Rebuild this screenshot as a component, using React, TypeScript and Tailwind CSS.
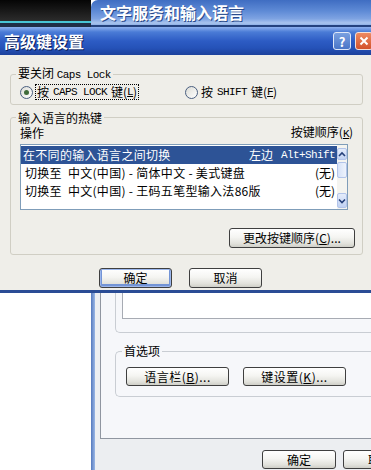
import React from "react";

const mono = "font-['Liberation_Mono',monospace] text-[11px] tracking-[-0.6px]";

function Btn({
  className,
  children,
  def,
}: {
  className: string;
  children: React.ReactNode;
  def?: boolean;
}) {
  return (
    <div
      className={
        "flex items-center justify-center rounded-[3px] border border-[#3f3f3f] bg-[linear-gradient(180deg,#ffffff_0%,#f5f5f2_45%,#e2e2dc_80%,#cfcfc8_100%)] text-[12px] leading-none text-black " +
        (def ? "shadow-[inset_0_0_0_1px_#9bb6ec,inset_0_-1px_0_2px_#7394d6] " : "") +
        className
      }
    >
      {children}
    </div>
  );
}

function Radio({ checked }: { checked?: boolean }) {
  return (
    <div className="flex h-[13px] w-[13px] shrink-0 items-center justify-center rounded-full border border-[#4a5f80] bg-[linear-gradient(135deg,#dcdcd6,#ffffff)]">
      {checked && <div className="h-[5px] w-[5px] rounded-full bg-[#3f6b3a]" />}
    </div>
  );
}

function Chevron({ up }: { up?: boolean }) {
  return (
    <svg width="8" height="6" viewBox="0 0 8 6">
      <path
        d={up ? "M1 5 L4 2 L7 5" : "M1 1.5 L4 4.5 L7 1.5"}
        fill="none"
        stroke="#25407a"
        strokeWidth="1.6"
      />
    </svg>
  );
}

export default function App() {
  return (
    <div className="relative flex h-[470px] w-[371px] overflow-hidden bg-white font-['Noto_Sans_CJK_SC',sans-serif] text-black">
      {/* desktop strip on the left */}
      <div className="flex w-[91px] shrink-0 flex-col">
        <div className="h-[21px] bg-[linear-gradient(180deg,#050505,#2c2c2c)]" />
        <div className="h-[2px] bg-[#48c4d4]" />
        <div className="h-[4px] bg-[#1f2d46]" />
        <div className="flex-1 bg-white" />
      </div>

      {/* back window */}
      <div className="flex min-w-0 flex-1 flex-col">
        <div className="h-[25px] shrink-0 rounded-tl-[7px] bg-[linear-gradient(180deg,#3f6dc2_0%,#5f8bd6_45%,#7ea3e2_75%,#a9c4ee_92%,#8eb0e6_100%)] pl-[9px] text-[16px] font-bold leading-[24px] text-white [text-shadow:1px_1px_#2a4a8a]">
          文字服务和输入语言
        </div>
        <div className="h-[2px] shrink-0 bg-[#24427e]" />
        <div className="flex flex-1">
          <div className="w-[4px] shrink-0 bg-[linear-gradient(90deg,#5579bd,#9ab7e6)]" />
          <div className="flex flex-1 flex-col bg-[#eceef1] pl-[5px] pt-[23px]">
            {/* tab page */}
            <div className="flex h-[389px] w-[400px] shrink-0 flex-col border-b border-l border-t border-[#9096a0] bg-[#f6f7fa] pl-[14px] pt-[9px]">
              <div className="h-[273px] w-[400px] shrink-0 rounded-l-[5px] border-b border-l border-t border-[#c9cdd3] pl-[6px] pt-[14px]">
                <div className="h-[244px] w-[400px] border-b border-l border-t border-[#a7abb3] bg-white" />
              </div>
              <fieldset className="mt-[11px] w-[400px] rounded-l-[5px] border-b border-l border-t border-[#c9cdd3] pl-[10px]">
                <legend className="ml-[-4px] px-[2px] text-[12px] leading-[14px]">首选项</legend>
                <div className="flex gap-[14px] pb-[10px] pt-[9px]">
                  <Btn className="h-[19px] w-[103px] tracking-[0.5px]">
                    语言栏(<span className="underline">B</span>)...
                  </Btn>
                  <Btn className="h-[19px] w-[103px] tracking-[0.5px]">
                    键设置(<span className="underline">K</span>)...
                  </Btn>
                </div>
              </fieldset>
            </div>
            <div className="ml-[162px] mt-[11px] flex gap-[7px]">
              <Btn className="h-[19px] w-[74px] shrink-0">确定</Btn>
              <Btn className="h-[19px] w-[74px] shrink-0">取消</Btn>
            </div>
          </div>
        </div>
      </div>

      {/* front dialog */}
      <div className="absolute left-0 top-[27px] flex w-[385px] flex-col">
        <div className="flex h-[28px] items-center bg-[linear-gradient(180deg,#8db0ee_0%,#4a7bd6_18%,#2d5cc4_50%,#2552b8_75%,#1d419c_100%)] pl-[4px] pr-[12px]">
          <div className="flex-1 text-[16px] font-bold leading-none text-white [text-shadow:1px_1px_#0b1f5a]">
            高级键设置
          </div>
          <div className="flex h-[18px] w-[18px] items-center justify-center rounded-[3px] border border-[#dfe8f8] bg-[linear-gradient(180deg,#7aa0e0,#4a76c8)] text-[13px] font-bold leading-none text-white">
            ?
          </div>
          <div className="ml-[4px] flex h-[18px] w-[18px] items-center justify-center rounded-[3px] border border-[#f4e0d8] bg-[linear-gradient(180deg,#ee8a62,#d3532c)]">
            <svg width="10" height="10" viewBox="0 0 10 10">
              <path d="M1.5 1.5 L8.5 8.5 M8.5 1.5 L1.5 8.5" stroke="#fff" strokeWidth="2" />
            </svg>
          </div>
        </div>

        <div className="flex h-[235px] flex-col bg-[#efeee9] pl-[10px] text-[12px]">
          {/* Caps Lock group */}
          <fieldset className="mt-[11px] w-[353px] rounded-[3px] border border-[#d0cec4] px-[9px]">
            <legend className="ml-[-4px] px-[2px] leading-[14px]">
              要关闭 <span className={mono}>Caps Lock</span>
            </legend>
            <div className="mb-[4px] mt-[2px] flex h-[16px] items-center">
              <div className="flex w-[165px] items-center">
                <Radio checked />
                <div className="ml-[2px] flex h-[16px] items-center border border-dotted border-black px-[1px] leading-none">
                  按 <span className={mono + " mx-[4px]"}>CAPS LOCK</span>键(
                  <span className={mono + " underline"}>L</span>)
                </div>
              </div>
              <div className="flex items-center">
                <Radio />
                <div className="ml-[3px] flex items-center leading-none">
                  按 <span className={mono + " mx-[4px]"}>SHIFT</span>键(
                  <span className={mono + " underline"}>F</span>)
                </div>
              </div>
            </div>
          </fieldset>

          {/* hotkeys group */}
          <fieldset className="mt-[6px] w-[353px] rounded-[3px] border border-[#d0cec4] px-[9px] pb-[6px]">
            <legend className="ml-[-4px] px-[2px] leading-[13px]">输入语言的热键</legend>
            <div className="flex h-[17px] items-center justify-between leading-none">
              <span>操作</span>
              <span>
                按键顺序(<span className={mono + " underline"}>K</span>)
              </span>
            </div>
            <div className="mt-[3px] flex h-[66px] w-[328px] border border-[#7f9db9] bg-white">
              <div className="flex flex-1 flex-col pt-[1px]">
                <div className="flex h-[18px] items-center justify-between bg-[#2d5396] pl-[2px] pr-[2px] text-white">
                  <span className="tracking-[0.3px]">在不同的输入语言之间切换</span>
                  <span className="flex items-center">
                    左边<span className={mono + " ml-[8px]"}>Alt+Shift</span>
                  </span>
                </div>
                <div className="flex h-[18px] items-center justify-between pl-[4px] pr-[2px]">
                  <span className="whitespace-pre tracking-[0.3px]">切换至  中文(中国) - 简体中文 - 美式键盘</span>
                  <span>(无)</span>
                </div>
                <div className="flex h-[18px] items-center justify-between pl-[4px] pr-[2px]">
                  <span className="whitespace-pre tracking-[0.3px]">切换至  中文(中国) - 王码五笔型输入法86版</span>
                  <span>(无)</span>
                </div>
              </div>
              <div className="flex w-[10px] flex-col bg-[#f4f4f0] pb-[1px] pt-[3px]">
                <div className="flex h-[12px] items-center justify-center rounded-[2px] border border-[#b2c4ea] bg-[linear-gradient(180deg,#e4ecfb,#c1d2f3)]">
                  <Chevron up />
                </div>
                <div className="mt-[2px] h-[16px] rounded-[2px] border border-[#b2c4ea] bg-[linear-gradient(90deg,#d6e2f8,#eef3fc)]" />
                <div className="flex-1" />
                <div className="flex h-[15px] items-center justify-center rounded-[2px] border border-[#b2c4ea] bg-[linear-gradient(180deg,#e4ecfb,#c1d2f3)]">
                  <Chevron />
                </div>
              </div>
            </div>
            <div className="-mr-[2px] mt-[18px] flex justify-end">
              <Btn className="h-[20px] w-[126px]">
                更改按键顺序(<span className="underline">C</span>)...
              </Btn>
            </div>
          </fieldset>

          <div className="ml-[89px] mt-[13px] flex gap-[17px]">
            <Btn def className="h-[20px] w-[73px]">
              确定
            </Btn>
            <Btn className="h-[20px] w-[73px]">取消</Btn>
          </div>
        </div>
        <div className="h-[3px] bg-[#2a4c95]" />
      </div>
    </div>
  );
}
